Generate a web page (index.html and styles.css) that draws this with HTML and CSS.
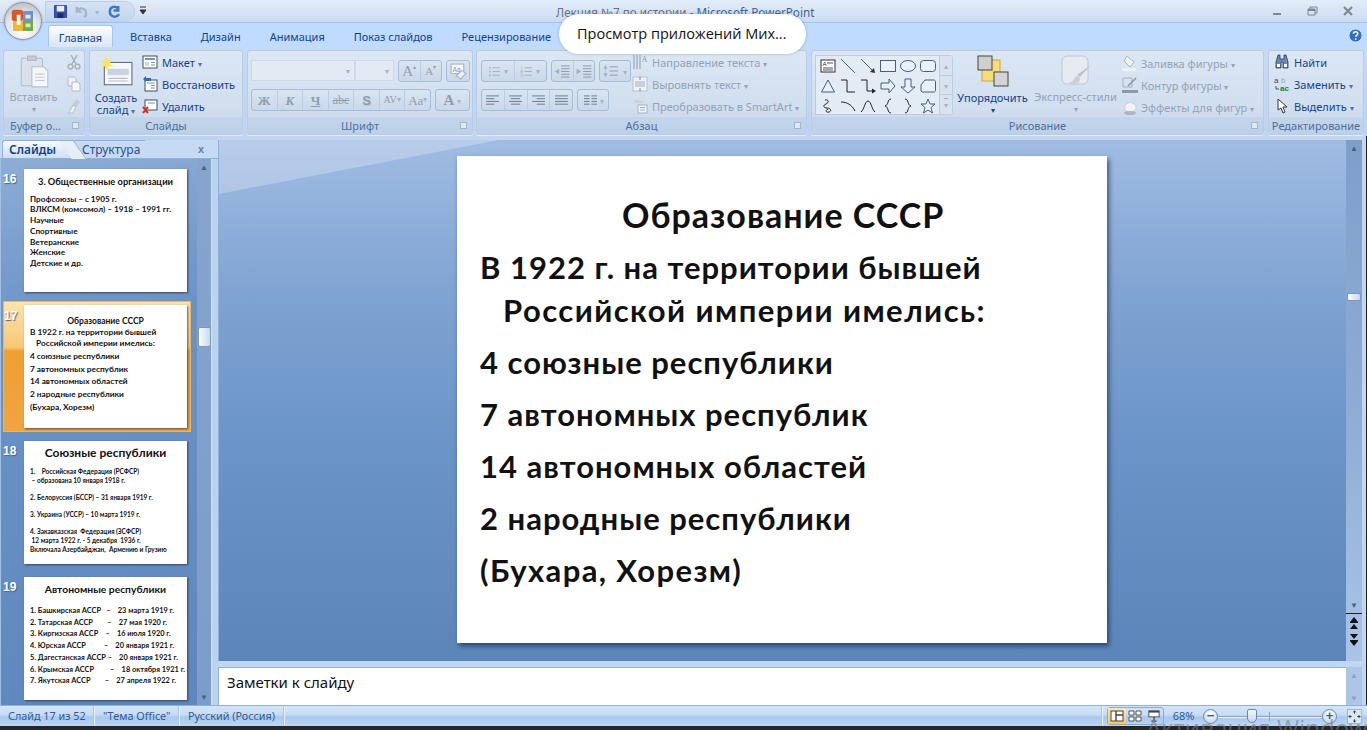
FILE: index.html

```html
<!DOCTYPE html>
<html lang="ru">
<head>
    <meta charset="UTF-8">
    <meta name="viewport" content="width=device-width, initial-scale=1.0">
    <title>Лекция №7 по истории - Microsoft PowerPoint</title>
    <link rel="stylesheet" href="styles.css">
</head>
<body>
    <header class="titlebar">
        <div class="qat">
            <svg class="qat-icon" viewBox="0 0 16 16"><rect x="1" y="1" width="14" height="14" rx="1" fill="#3a4fa8"/><rect x="4" y="2" width="8" height="6" fill="#e8eefa"/><rect x="5" y="10" width="6" height="5" fill="#1c2a70"/></svg>
            <svg class="qat-icon" viewBox="0 0 16 16"><path d="M3 3v5h5M3 8c3-5 10-4 10 2 0 2-1 3-2 4" fill="none" stroke="#a3b4cb" stroke-width="2.4"/></svg>
            <span class="qat-drop">▾</span>
            <svg class="qat-icon" viewBox="0 0 16 16"><path d="M12 2v5H7M12 5C9 1 3 3 3 8s6 8 10 3" fill="none" stroke="#3c78c8" stroke-width="2.6"/></svg>
        </div>
        <svg class="qat-more" viewBox="0 0 8 10"><path d="M1 1h6M1 4h6l-3 4z" fill="#333" stroke="#333"/></svg>
        <div class="doc-title">Лекция №7 по истории - <span class="app-name">Microsoft PowerPoint</span></div>
        <div class="win-controls">
            <svg viewBox="0 0 12 12"><rect x="1" y="8" width="8" height="2" fill="#7c8794"/></svg>
            <svg viewBox="0 0 12 12"><path d="M1 4h7v6H1zM3 4V2h7v6H8" fill="none" stroke="#7c8794"/><rect x="1" y="4" width="7" height="2" fill="#7c8794"/></svg>
            <svg viewBox="0 0 12 12"><path d="M2 2l8 8M10 2l-8 8" stroke="#7c8794" stroke-width="2.2"/></svg>
        </div>
    </header>

    <div class="office-btn">
        <svg viewBox="0 0 24 24">
            <rect x="3" y="3" width="9" height="9" rx="2" fill="#d9572b"/>
            <rect x="12" y="4" width="8" height="8" fill="#5a84c8" opacity=".85"/>
            <rect x="4" y="12" width="8" height="8" fill="#eeb735"/>
            <rect x="12" y="12" width="8" height="8" fill="#74ab3f"/>
            <rect x="7" y="7" width="3" height="8" fill="#fff"/>
            <rect x="14" y="7" width="4" height="3" fill="#fff" opacity=".8"/>
            <rect x="14" y="14" width="4" height="3" fill="#fff" opacity=".7"/>
        </svg>
    </div>

    <nav class="tabs">
        <a class="tab tab-active">Главная</a>
        <a class="tab">Вставка</a>
        <a class="tab">Дизайн</a>
        <a class="tab">Анимация</a>
        <a class="tab">Показ слайдов</a>
        <a class="tab">Рецензирование</a>
        <svg class="help" viewBox="0 0 16 16"><circle cx="8" cy="8" r="7" fill="#2f6fc4" stroke="#dbe8f8"/><path d="M5.800 6.200c0-3 4.600-3 4.600 0 0 1.600-2.200 1.600-2.200 3.200" fill="none" stroke="#fff" stroke-width="1.600"/><circle cx="8.200" cy="11.800" r="1" fill="#fff"/></svg>
    </nav>

    <div class="pill">Просмотр приложений Мих...</div>

    <section class="ribbon">
        <div class="group g-clip">
            <div class="group-body clip-body">
                <div class="big-btn off">
                    <svg class="big-icon" viewBox="0 0 30 32"><rect x="3" y="3" width="20" height="26" rx="2" fill="#d9e1ea" stroke="#b3bdc9"/><rect x="9" y="1" width="8" height="4" fill="#c7cfd9" stroke="#aab4c0"/><path d="M13 11h11l4 4v15H13z" fill="#f4f6f9" stroke="#b8c1cc"/><path d="M16 18h9M16 21h9M16 24h9" stroke="#c5ccd6"/></svg>
                    <span class="big-label">Вставить</span>
                    <span class="arrow-only">▾</span>
                </div>
                <div class="icon-col">
                    <svg viewBox="0 0 14 16"><path d="M4 1l5 9M10 1L5 10" stroke="#a7b0bb" stroke-width="1.400"/><circle cx="3.500" cy="12.500" r="2.400" fill="none" stroke="#a7b0bb" stroke-width="1.400"/><circle cx="10.500" cy="12.500" r="2.400" fill="none" stroke="#a7b0bb" stroke-width="1.400"/></svg>
                    <svg viewBox="0 0 14 16"><path d="M1 1h6l2 2v7H1z" fill="#eef1f5" stroke="#b2bbc6"/><path d="M5 6h6l2 2v7H5z" fill="#f5f7fa" stroke="#b2bbc6"/></svg>
                    <svg viewBox="0 0 14 16"><path d="M9 1l4 3-4 5-3-2z" fill="#c4ccd6"/><path d="M6 7l3 2-3 6H1c2-2 3-4 5-8z" fill="#eceff3" stroke="#b6bfc9"/></svg>
                </div>
            </div>
            <div class="group-label label-clip">Буфер о...<span class="launcher"></span></div>
        </div>

        <div class="group g-slides">
            <div class="group-body slides-body">
                <div class="big-btn new-slide">
                    <svg class="big-icon" viewBox="0 0 32 30"><rect x="5" y="6" width="26" height="21" fill="#f4f7fb" stroke="#5d6b7c"/><rect x="8" y="12" width="20" height="6" fill="#c9d2dd"/><path d="M9 21h18M9 23.500h18" stroke="#b4bfcc"/><path d="M7 0l1.500 4.500L13 3 10 7l3.500 3-4.500-.5L7 14l-1.500-4.500L1 10l3-3-3-3.500 4.500.8z" fill="#f8e564"/></svg>
                    <span class="big-label dark">Создать<br>слайд <i class="caret">▾</i></span>
                </div>
                <div class="cmd-col">
                    <div class="cmd"><svg viewBox="0 0 16 16"><rect x="1" y="2" width="14" height="12" fill="#fff" stroke="#3f4f66"/><rect x="3" y="4" width="10" height="2" fill="#7f91a8"/><rect x="3" y="8" width="4" height="4" fill="#c9d6e6"/><path d="M9 8.500h4M9 11h4" stroke="#7f91a8"/></svg><span>Макет <i class="caret">▾</i></span></div>
                    <div class="cmd"><svg viewBox="0 0 16 16"><rect x="3" y="4" width="12" height="11" fill="#fff" stroke="#3f4f66"/><path d="M5 7h8M9 9.500h4M9 12h4" stroke="#7f91a8"/><path d="M1 3l3-3v2h5v3H4v1z" fill="#2d6dc0"/></svg><span>Восстановить</span></div>
                    <div class="cmd"><svg viewBox="0 0 16 16"><rect x="3" y="2" width="12" height="10" fill="#fff" stroke="#3f4f66"/><path d="M6 5h7" stroke="#7f91a8"/><path d="M1 9l5 6M6 9l-5 6" stroke="#d8321e" stroke-width="2"/></svg><span>Удалить</span></div>
                </div>
            </div>
            <div class="group-label">Слайды</div>
        </div>

        <div class="group g-font">
            <div class="group-body font-body">
                <div class="tool-row">
                    <div class="combo font-name"><i class="caret">▾</i></div>
                    <div class="combo font-size"><i class="caret">▾</i></div>
                    <div class="box grow-box"><span class="tool serif big-a">A<sup>▴</sup></span><span class="tool serif small-a">A<sup>▾</sup></span></div>
                    <div class="box clear-box"><svg viewBox="0 0 16 16"><rect x="1" y="1" width="12" height="9" fill="#f2f5f8" stroke="#a6b1be"/><text x="2.500" y="8" font-size="6" fill="#8e99a6" font-family="Liberation Sans">Aa</text><path d="M6 12l5-5 4 3-5 5z" fill="#eef1f5" stroke="#a6b1be"/></svg></div>
                </div>
                <div class="tool-row">
                    <div class="box fmt-box">
                        <span class="tool serif b">Ж</span><span class="tool serif b it">К</span><span class="tool serif b un">Ч</span><span class="tool serif strike">abc</span><span class="tool b shadow-s">S</span><span class="tool serif av">AV<i class="caret">▾</i></span><span class="tool serif aa">Aa<i class="caret">▾</i></span>
                    </div>
                    <div class="box color-box"><span class="tool serif b a-big">A</span><i class="caret">▾</i></div>
                </div>
            </div>
            <div class="group-label">Шрифт<span class="launcher"></span></div>
        </div>

        <div class="group g-para">
            <div class="group-body para-body">
                <div class="para-left">
                    <div class="tool-row">
                        <div class="box list-box">
                            <span class="tool"><svg viewBox="0 0 20 14"><path d="M6 2h10M6 7h10M6 12h10" stroke="#9aa6b5"/><circle cx="2.500" cy="2" r="1.300" fill="#aeb8c4"/><circle cx="2.500" cy="7" r="1.300" fill="#aeb8c4"/><circle cx="2.500" cy="12" r="1.300" fill="#aeb8c4"/></svg><i class="caret">▾</i></span>
                            <span class="tool"><svg viewBox="0 0 20 14"><path d="M6 2h10M6 7h10M6 12h10" stroke="#9aa6b5"/><path d="M2 0.500v3M1 6h3v1H1v2h3M1 11h3v2H1" fill="none" stroke="#aeb8c4" stroke-width=".8"/></svg><i class="caret">▾</i></span>
                        </div>
                        <div class="box indent-box">
                            <span class="tool"><svg viewBox="0 0 18 14"><path d="M8 1h9M8 4h9M8 7h9M8 10h9M8 13h9" stroke="#8896a8"/><path d="M1 7l5-3v6z" fill="#9fb0c6"/></svg></span>
                            <span class="tool"><svg viewBox="0 0 18 14"><path d="M8 1h9M8 4h9M8 7h9M8 10h9M8 13h9" stroke="#8896a8"/><path d="M6 7L1 4v6z" fill="#9fb0c6"/></svg></span>
                        </div>
                        <div class="box spacing-box"><svg viewBox="0 0 24 16"><path d="M8 3h10M8 8h10M8 13h10" stroke="#8896a8"/><path d="M3 1l-2 4h4zM3 15l-2-4h4zM3 4v8" fill="#9fb0c6" stroke="#9fb0c6" stroke-width=".6"/></svg><i class="caret">▾</i></div>
                    </div>
                    <div class="tool-row">
                        <div class="box align-box">
                            <span class="tool"><svg viewBox="0 0 16 12"><path d="M1 1h14M1 4h9M1 7h14M1 10h9" stroke="#62738a"/></svg></span>
                            <span class="tool"><svg viewBox="0 0 16 12"><path d="M1 1h14M3 4h10M1 7h14M3 10h10" stroke="#62738a"/></svg></span>
                            <span class="tool"><svg viewBox="0 0 16 12"><path d="M1 1h14M6 4h9M1 7h14M6 10h9" stroke="#62738a"/></svg></span>
                            <span class="tool"><svg viewBox="0 0 16 12"><path d="M1 1h14M1 4h14M1 7h14M1 10h14" stroke="#62738a"/></svg></span>
                        </div>
                        <div class="box cols-box"><svg viewBox="0 0 16 12"><path d="M1 1h6M9 1h6M1 4h6M9 4h6M1 7h6M9 7h6M1 10h6M9 10h6" stroke="#62738a"/></svg><i class="caret">▾</i></div>
                    </div>
                </div>
                <div class="cmd-col off">
                    <div class="cmd"><svg viewBox="0 0 16 16"><path d="M2 1v14M5 1v14M8 1v14" stroke="#8c99a9"/><text x="9.500" y="8" font-size="8" fill="#8c99a9" font-family="Liberation Serif">A</text></svg><span>Направление текста <i class="caret">▾</i></span></div>
                    <div class="cmd"><svg viewBox="0 0 16 16"><rect x="1" y="1" width="14" height="14" fill="#eff2f6" stroke="#b7c0cb"/><path d="M3 6h10M3 8h10M3 10h10" stroke="#a3afbd"/><path d="M8 1v3M8 12v3" stroke="#7d8ea3"/></svg><span>Выровнять текст <i class="caret">▾</i></span></div>
                    <div class="cmd"><svg viewBox="0 0 16 16"><path d="M1 2h7l3 3H4z" fill="#c9d1db"/><rect x="6" y="7" width="9" height="8" fill="#f1f4f7" stroke="#aab4c0"/><path d="M8 9.500h5M8 12h5" stroke="#a3afbd"/></svg><span>Преобразовать в SmartArt <i class="caret">▾</i></span></div>
                </div>
            </div>
            <div class="group-label">Абзац<span class="launcher"></span></div>
        </div>

        <div class="group g-draw">
            <div class="group-body draw-body">
                <div class="gallery">
                    <div class="shapes">
                        <svg viewBox="0 0 16 16"><rect x="1" y="2" width="14" height="12" fill="#fff" stroke="#333"/><text x="2.500" y="8" font-size="6" font-family="Liberation Sans" fill="#222">A</text><path d="M7 5h6M3 10h10M3 12h10" stroke="#555"/></svg>
                        <svg viewBox="0 0 16 16"><path d="M1 1l14 14" stroke="#4c5d75"/></svg>
                        <svg viewBox="0 0 16 16"><path d="M1 1l13 13" stroke="#4c5d75"/><path d="M15 15l-1-5-4 4z" fill="#333"/></svg>
                        <svg viewBox="0 0 16 16"><rect x="0.500" y="2.500" width="15" height="11" fill="#e8f0fa" stroke="#4c5d75"/></svg>
                        <svg viewBox="0 0 16 16"><ellipse cx="8" cy="8" rx="7.500" ry="5.500" fill="#e8f0fa" stroke="#4c5d75"/></svg>
                        <svg viewBox="0 0 16 16"><rect x="0.500" y="2.500" width="15" height="11" rx="3" fill="#e8f0fa" stroke="#4c5d75"/></svg>
                        <svg viewBox="0 0 16 16"><path d="M8 2l6.500 12h-13z" fill="#e8f0fa" stroke="#4c5d75"/></svg>
                        <svg viewBox="0 0 16 16"><path d="M1 2h6v12h8" fill="none" stroke="#222"/></svg>
                        <svg viewBox="0 0 16 16"><path d="M1 2h6v11h7" fill="none" stroke="#222"/><path d="M16 13l-4-2.500v5z" fill="#222"/></svg>
                        <svg viewBox="0 0 16 16"><path d="M1 5h8V1l6 7-6 7v-4H1z" fill="#e8f0fa" stroke="#4c5d75"/></svg>
                        <svg viewBox="0 0 16 16"><path d="M5 1h6v8h4l-7 6-7-6h4z" fill="#e8f0fa" stroke="#4c5d75"/></svg>
                        <svg viewBox="0 0 16 16"><path d="M1 13V7l4-5h9c1 0 1.500 1 1.500 2v8c0 1-.5 2-1.500 2H2z" fill="#e8f0fa" stroke="#4c5d75"/></svg>
                        <svg viewBox="0 0 16 16"><path d="M5 2c4-1 4 3 1 4s-3 4 1 4 5 3 2 4-4-2-1-3" fill="none" stroke="#222"/></svg>
                        <svg viewBox="0 0 16 16"><path d="M1 4c6 0 11 3 14 9" fill="none" stroke="#222"/></svg>
                        <svg viewBox="0 0 16 16"><path d="M1 14C4 12 5 3 8 3s4 9 7 11" fill="none" stroke="#222"/></svg>
                        <svg viewBox="0 0 16 16"><path d="M11 1C7 1 9 7 5 8c4 1 2 7 6 7" fill="none" stroke="#222"/></svg>
                        <svg viewBox="0 0 16 16"><path d="M5 1c4 0 2 6 6 7-4 1-2 7-6 7" fill="none" stroke="#222"/></svg>
                        <svg viewBox="0 0 16 16"><path d="M8 1l2 5h5l-4 3.500 1.500 5.500L8 12l-4.500 3L5 9.500 1 6h5z" fill="#e8f0fa" stroke="#4c5d75"/></svg>
                    </div>
                    <div class="gallery-scroll">
                        <span>▴</span><span>▾</span><span class="more">▾</span>
                    </div>
                </div>
                <div class="big-btn arrange">
                    <svg class="arrange-icon" viewBox="0 0 32 32"><rect x="5" y="5" width="18" height="21" fill="#f7dd78" stroke="#c8a83a"/><rect x="1" y="1" width="14" height="14" fill="#cfcfcf" stroke="#444"/><rect x="17" y="17" width="14" height="14" fill="#d4d4d4" stroke="#444"/></svg>
                    <span class="big-label dark">Упорядочить</span>
                    <span class="arrow-only dark">▾</span>
                </div>
                <div class="big-btn express off">
                    <svg class="arrange-icon" viewBox="0 0 32 32"><rect x="2" y="1" width="26" height="28" rx="5" fill="#e6ebf1" stroke="#bdc6d1"/><path d="M31 10L20 22l-3-2z" fill="#b8c1cc"/><path d="M17 21c-3 1-2 5-8 7 5 2 11 0 11-5z" fill="#c6ced8"/></svg>
                    <span class="big-label">Экспресс-стили</span>
                    <span class="arrow-only">▾</span>
                </div>
                <div class="cmd-col off">
                    <div class="cmd"><svg viewBox="0 0 16 16"><path d="M5 1l7 6-4 5-6-6z" fill="#eef1f5" stroke="#aab4c0"/><rect x="0" y="13" width="14" height="3" fill="#edf1f5"/></svg><span>Заливка фигуры <i class="caret">▾</i></span></div>
                    <div class="cmd"><svg viewBox="0 0 16 16"><path d="M1 1h9v9H1z" fill="none" stroke="#a4afbd"/><path d="M14 1l-8 8" stroke="#8795a7" stroke-width="1.600"/><rect x="0" y="13" width="16" height="3" fill="#8d99a8"/></svg><span>Контур фигуры <i class="caret">▾</i></span></div>
                    <div class="cmd"><svg viewBox="0 0 16 16"><path d="M3 6l5-3 6 3v5l-6 3-5-3z" fill="#f1f3f6" stroke="#c9d0d9"/><ellipse cx="8" cy="14" rx="6" ry="2" fill="#aab6c4"/></svg><span>Эффекты для фигур <i class="caret">▾</i></span></div>
                </div>
            </div>
            <div class="group-label">Рисование<span class="launcher"></span></div>
        </div>

        <div class="group g-edit">
            <div class="group-body edit-body">
                <div class="cmd-col">
                    <div class="cmd"><svg viewBox="0 0 16 16"><path d="M4 1h2v4h4V1h2l2 7v6H9V8H7v6H2V8z" fill="#6f87aa" stroke="#24386a" stroke-width=".8"/><rect x="3" y="10" width="3" height="3" fill="#fff"/><rect x="10" y="10" width="3" height="3" fill="#fff"/></svg><span>Найти</span></div>
                    <div class="cmd"><svg viewBox="0 0 16 16"><text x="0" y="7" font-size="8" font-family="Liberation Sans" fill="#444">a</text><text x="7" y="7" font-size="8" font-family="Liberation Sans" fill="#9aa8b8">b</text><text x="6" y="15" font-size="8" font-weight="bold" font-family="Liberation Sans" fill="#1f7a3a">ac</text><path d="M2 10v3h3" fill="none" stroke="#33578c"/></svg><span>Заменить <i class="caret">▾</i></span></div>
                    <div class="cmd"><svg viewBox="0 0 16 16"><path d="M4 1v11l3-2 2 5 2-1-2-5h4z" fill="#fff" stroke="#333"/></svg><span>Выделить <i class="caret">▾</i></span></div>
                </div>
            </div>
            <div class="group-label">Редактирование</div>
        </div>
    </section>

    <main class="workspace">
        <aside class="pane">
            <div class="pane-tabs">
                <span class="pane-tab pane-tab-on">Слайды</span>
                <span class="pane-tab">Структура</span>
                <span class="pane-close">x</span>
            </div>
            <div class="pane-body">
                <div class="thumbs">
                    <div class="thumb-row t16">
                        <span class="num">16</span>
                        <div class="thumb">
                            <h4 class="thumb-title">3. Общественные организации</h4>
                            <p>Профсоюзы – с 1905 г.</p>
                            <p>ВЛКСМ (комсомол) – 1918 – 1991 гг.</p>
                            <p>Научные</p>
                            <p>Спортивные</p>
                            <p>Ветеранские</p>
                            <p>Женские</p>
                            <p>Детские и др.</p>
                        </div>
                    </div>
                    <div class="thumb-row t17 selected">
                        <span class="num">17</span>
                        <div class="thumb">
                            <h4 class="thumb-title">Образование СССР</h4>
                            <p class="tight">В 1922 г. на территории бывшей</p>
                            <p class="hang">Российской империи имелись:</p>
                            <p>4 союзные республики</p>
                            <p>7 автономных республик</p>
                            <p>14 автономных областей</p>
                            <p>2 народные республики</p>
                            <p>(Бухара, Хорезм)</p>
                        </div>
                    </div>
                    <div class="thumb-row t18">
                        <span class="num">18</span>
                        <div class="thumb">
                            <h4 class="thumb-title">Союзные республики</h4>
                            <p>1.&nbsp;&nbsp;&nbsp;&nbsp;Российская Федерация (РСФСР)</p>
                            <p class="gap-after">&nbsp;– образована 10 января 1918 г.</p>
                            <p class="gap-after">2. Белоруссия (БССР) – 31 января 1919 г.</p>
                            <p class="gap-after">3. Украина (УССР) – 10 марта 1919 г.</p>
                            <p>4. Закавказская&nbsp; Федерация (ЗСФСР)</p>
                            <p>&nbsp;12 марта 1922 г. - 5 декабря&nbsp; 1936 г.</p>
                            <p>Включала Азербайджан,&nbsp; Армению и Грузию</p>
                        </div>
                    </div>
                    <div class="thumb-row t19">
                        <span class="num">19</span>
                        <div class="thumb">
                            <h4 class="thumb-title">Автономные республики</h4>
                            <p>1. Башкирская АССР&nbsp;&nbsp; –&nbsp;&nbsp;&nbsp; 23 марта 1919 г.</p>
                            <p>2. Татарская АССР&nbsp;&nbsp;&nbsp;&nbsp;&nbsp;&nbsp;&nbsp; –&nbsp;&nbsp;&nbsp; 27 мая 1920 г.</p>
                            <p>3. Киргизская АССР&nbsp;&nbsp;&nbsp; –&nbsp;&nbsp;&nbsp; 16 июля 1920 г.</p>
                            <p>4. Юрская АССР&nbsp;&nbsp;&nbsp;&nbsp;&nbsp;&nbsp;&nbsp;&nbsp;&nbsp; –&nbsp;&nbsp;&nbsp; 20 января 1921 г.</p>
                            <p>5. Дагестанская АССР –&nbsp;&nbsp;&nbsp; 20 января 1921 г.</p>
                            <p>6. Крымская АССР&nbsp;&nbsp;&nbsp;&nbsp;&nbsp;&nbsp;&nbsp;&nbsp; –&nbsp;&nbsp;&nbsp; 18 октября 1921 г.</p>
                            <p>7. Якутская АССР&nbsp;&nbsp;&nbsp;&nbsp;&nbsp;&nbsp;&nbsp; –&nbsp;&nbsp;&nbsp; 27 апреля 1922 г.</p>
                        </div>
                    </div>
                </div>
                <div class="pane-scroll">
                    <span class="sb-arrow">▲</span>
                    <span class="sb-thumb"></span>
                    <span class="sb-arrow sb-end">▼</span>
                </div>
            </div>
        </aside>

        <div class="editor">
            <div class="stage">
                <article class="slide">
                    <h1 class="slide-title">Образование СССР</h1>
                    <p class="slide-line first">В 1922 г. на территории бывшей</p>
                    <p class="slide-line hanging">Российской империи имелись:</p>
                    <p class="slide-line">4 союзные республики</p>
                    <p class="slide-line">7 автономных республик</p>
                    <p class="slide-line">14 автономных областей</p>
                    <p class="slide-line">2 народные республики</p>
                    <p class="slide-line wide">(Бухара, Хорезм)</p>
                </article>
            </div>
            <div class="notes">Заметки к слайду</div>
        </div>

        <div class="main-scroll">
            <div class="stage-scroll">
                <span class="sb-arrow">▲</span>
                <span class="sb-thumb main-thumb"></span>
                <span class="sb-arrow sb-end">▼</span>
                <svg class="page-btn" viewBox="0 0 10 13"><path d="M5 0l4 5H1zM5 7l4 5H1z" fill="#111"/><rect x="1" y="5" width="8" height="1" fill="#111"/></svg>
                <svg class="page-btn" viewBox="0 0 10 13"><path d="M5 6l4-5H1zM5 13l4-5H1z" fill="#111"/><rect x="1" y="7" width="8" height="1" fill="#111"/></svg>
            </div>
            <div class="notes-scroll">
                <span class="sb-arrow">▲</span>
                <span class="sb-arrow">▼</span>
            </div>
        </div>
    </main>

    <footer class="status">
        <span class="st-item st-first">Слайд 17 из 52</span>
        <span class="st-item st-theme">"Тема Office"</span>
        <span class="st-item st-lang">Русский (Россия)</span>
        <div class="st-right">
            <div class="view-btns">
                <span class="view-btn view-on"><svg viewBox="0 0 14 12"><rect x="1" y="1" width="12" height="10" fill="#fff" stroke="#444"/><path d="M6 1v10M6 5h7" stroke="#444" stroke-width="1.400"/></svg></span>
                <span class="view-btn"><svg viewBox="0 0 14 12"><path d="M1 1h5v4H1zM8 1h5v4H8zM1 7h5v4H1zM8 7h5v4H8z" fill="#fff" stroke="#555"/></svg></span>
                <span class="view-btn"><svg viewBox="0 0 14 14"><rect x="1" y="1" width="12" height="7" fill="#fff" stroke="#444"/><path d="M7 8v4M4 13h6" stroke="#444" stroke-width="1.400"/><rect x="1" y="1" width="12" height="2" fill="#444"/></svg></span>
            </div>
            <span class="zoom-pct">68%</span>
            <span class="zoom-round">−</span>
            <div class="zoom-track"><span class="zoom-mid"></span><span class="zoom-knob"></span></div>
            <span class="zoom-round">+</span>
            <span class="zoom-fit"><svg viewBox="0 0 14 14"><path d="M7 1v3M5.500 2.500L7 1l1.500 1.500M7 13v-3M5.500 11.500L7 13l1.500-1.500M1 7h3M2.500 5.500L1 7l1.500 1.500M13 7h-3M11.500 5.500L13 7l-1.500 1.500" fill="none" stroke="#333"/></svg></span>
        </div>
    </footer>
    <div class="bottom-strip"></div>
    <div class="activation">Активация Windows</div>
</body>
</html>
```

FILE: styles.css

```css
* {
    box-sizing: border-box;
}

html, body {
    height: 730px;
}

body {
    position: relative;
    margin: 0;
    overflow: hidden;
    display: flex;
    flex-direction: column;
    font-family: "Noto Sans", "Open Sans", sans-serif;
    font-size: 11px;
    color: #15428b;
    background: #bfd6f3;
}

svg {
    display: block;
    flex: none;
}

i {
    font-style: normal;
}

.caret {
    font-size: 8px;
    color: #5c7397;
}

/* title bar */
.titlebar {
    height: 23px;
    display: flex;
    align-items: center;
    padding-left: 45px;
    background: linear-gradient(#e3ecf8, #d6e3f4 60%, #c9dbf2);
    border-bottom: 1px solid #a4c1e6;
}

.qat {
    width: 90px;
    height: 21px;
    display: flex;
    align-items: center;
    gap: 6px;
    padding-left: 7px;
    background: linear-gradient(#d5e2f3, #c2d5ee);
    border-radius: 0 12px 12px 0;
    border: 1px solid #b9cde8;
}

.qat-icon {
    width: 15px;
    height: 15px;
}

.qat-drop {
    font-size: 8px;
    color: #a3b4cb;
    width: 6px;
}

.qat-more {
    width: 8px;
    height: 10px;
    margin-left: 4px;
}

.doc-title {
    width: 250px;
    margin-left: 409px;
    white-space: nowrap;
    font-size: 11.700px;
    color: #69727f;
    padding-top: 1px;
}

.app-name {
    color: #3f6397;
}

.win-controls {
    margin-left: auto;
    display: flex;
    gap: 23px;
    padding-right: 13px;
}

.win-controls svg {
    width: 12px;
    height: 12px;
}

.office-btn {
    position: absolute;
    left: 4px;
    top: 2px;
    width: 38px;
    height: 38px;
    border-radius: 50%;
    display: flex;
    align-items: center;
    justify-content: center;
    background: radial-gradient(circle at 50% 75%, #fff, #dfe3e8 55%, #a9adb3);
    border: 1px solid #8e97a3;
    box-shadow: 0 0 2px rgba(60, 80, 110, .5);
}

.office-btn svg {
    width: 30px;
    height: 30px;
}

/* tabs */
.tabs {
    height: 24px;
    display: flex;
    align-items: flex-end;
    padding-left: 48px;
    background: #bfdbff;
}

.tab {
    height: 22px;
    padding: 4px 12px 0;
    margin-right: 5px;
    font-size: 11px;
    white-space: nowrap;
    color: #15428b;
}

.tab-active {
    width: 65px;
    padding: 4px 0 0;
    text-align: center;
    margin-right: 5px;
    background: linear-gradient(#fbfdff, #d9e6f6);
    border: 1px solid #a9c4e8;
    border-bottom: 0;
    border-radius: 3px 3px 0 0;
}

.help {
    width: 15px;
    height: 15px;
    margin-left: auto;
    margin-right: 4px;
    margin-bottom: 4px;
}

.pill {
    position: absolute;
    left: 559px;
    top: 14px;
    width: 247px;
    height: 40px;
    border-radius: 20px;
    background: #fff;
    color: #111;
    font-family: "Open Sans", sans-serif;
    font-size: 14.500px;
    line-height: 40px;
    padding-left: 18px;
    white-space: nowrap;
    box-shadow: 0 0 3px rgba(50, 70, 100, .35);
}

/* ribbon */
.ribbon {
    height: 89px;
    display: flex;
    gap: 4px;
    padding: 3px 3px 1px;
    background: linear-gradient(#c4daf6, #bcd3ef);
}

.group {
    display: flex;
    flex-direction: column;
    border: 1px solid #b7cbe3;
    border-radius: 3px;
    background: linear-gradient(#dce7f4, #d0deef 70%, #c8d9ec);
    box-shadow: 0 1px 1px #e6eefa;
}

.g-clip { width: 82px; }
.g-slides { width: 154px; }
.g-font { width: 226px; }
.g-para { width: 331px; margin-left: -1px; }
.g-draw { width: 453px; }
.g-edit { width: 96px; }

.group-body {
    flex: 1;
    display: flex;
    min-height: 0;
}

.group-label {
    position: relative;
    height: 17px;
    flex: none;
    text-align: center;
    line-height: 18px;
    font-size: 11px;
    color: #4d6e9c;
    background: linear-gradient(#c4d5ea, #bcd0e8);
}

.label-clip {
    text-align: left;
    padding-left: 6px;
}

.launcher {
    position: absolute;
    right: 5px;
    top: 5px;
    width: 7px;
    height: 7px;
    border: 1px solid #a3b5cc;
    background: #dfe8f3;
}

.big-btn {
    display: flex;
    flex-direction: column;
    align-items: center;
    flex: none;
}

.big-label {
    line-height: 12px;
    text-align: center;
    white-space: nowrap;
    color: #93a2b5;
    margin-top: 2px;
}

.big-label.dark,
.arrow-only.dark {
    color: #15428b;
}

.arrow-only {
    font-size: 8px;
    line-height: 12px;
    color: #93a2b5;
}

.big-icon {
    width: 34px;
    height: 34px;
    margin-top: 3px;
}

.off .cmd span,
.off .caret {
    color: #93a2b5;
}

/* clipboard */
.clip-body {
    padding: 1px 0 0 5px;
}

.clip-body .big-btn {
    width: 49px;
}

.icon-col {
    display: flex;
    flex-direction: column;
    gap: 6px;
    padding: 2px 0 0 9px;
}

.icon-col svg {
    width: 14px;
    height: 16px;
}

/* commands */
.cmd-col {
    display: flex;
    flex-direction: column;
    gap: 6px;
    padding-top: 3px;
}

.cmd {
    height: 16px;
    display: flex;
    align-items: center;
    gap: 4px;
    white-space: nowrap;
    font-size: 11px;
}

.cmd svg {
    width: 16px;
    height: 16px;
}

/* slides */
.new-slide {
    width: 52px;
}

.new-slide .big-icon {
    margin-top: 4px;
}

.new-slide .big-label {
    margin-top: 3px;
}

/* font */
.font-body,
.para-left {
    flex-direction: column;
    gap: 7px;
}

.font-body {
    padding: 9px 0 0 3px;
}

.para-left {
    display: flex;
    padding: 9px 0 0 4px;
    width: 157px;
    flex: none;
}

.tool-row {
    display: flex;
    height: 22px;
    gap: 4px;
}

.combo {
    height: 21px;
    display: flex;
    justify-content: flex-end;
    align-items: center;
    padding-right: 4px;
    background: #e3eaf3;
    border: 1px solid #cfd9e6;
}

.combo .caret {
    color: #a6b2c2;
}

.font-name { width: 104px; }
.font-size { width: 39px; margin-left: -4px; }

.box {
    height: 22px;
    display: flex;
    align-items: center;
    justify-content: center;
    border: 1px solid #a8bcd6;
    border-radius: 3px;
    background: linear-gradient(#dbe5f1, #c9d8eb);
    color: #8f9dae;
}

.box .caret {
    color: #a6b2c2;
}

.tool {
    flex: 1;
    height: 100%;
    display: flex;
    align-items: center;
    justify-content: center;
    border-right: 1px solid #bccde2;
    line-height: 1;
}

.tool:last-child {
    border-right: 0;
}

.tool svg {
    width: 18px;
    height: 13px;
}

.serif {
    font-family: "Liberation Serif", serif;
}

.b { font-weight: bold; font-size: 13px; }
.it { font-style: italic; }
.un { text-decoration: underline; }
.strike { text-decoration: line-through; font-size: 12px; }
.shadow-s { font-family: "Liberation Sans", sans-serif; text-shadow: 1px 1px 1px #b9c2ce; }
.av { font-size: 10px; }
.aa { font-size: 13px; }

sup {
    font-size: 6px;
    align-self: flex-start;
    margin-top: 3px;
}

.big-a { font-size: 15px; }
.small-a { font-size: 11px; }
.a-big { font-size: 15px; }

.grow-box { width: 44px; }
.clear-box { width: 24px; }
.clear-box svg { width: 17px; height: 17px; }
.fmt-box { width: 180px; }
.color-box { width: 35px; gap: 3px; }
.color-box .tool { border: 0; flex: none; }

/* paragraph */
.list-box { width: 66px; }
.list-box svg { width: 15px; height: 11px; margin-right: 1px; }
.indent-box { width: 44px; }
.spacing-box { width: 32px; }
.spacing-box svg { width: 20px; height: 14px; }
.align-box { width: 92px; }
.cols-box { width: 32px; gap: 2px; }
.cols-box svg { width: 15px; height: 11px; }
.align-box svg { width: 15px; height: 11px; }

.para-body .cmd-col {
    margin-left: -2px;
}

/* drawing */
.draw-body {
    padding: 4px 0 0 3px;
}

.gallery {
    display: flex;
    height: 60px;
    flex: none;
}

.shapes {
    width: 124px;
    display: grid;
    grid-template-columns: repeat(6, 20px);
    grid-auto-rows: 20px;
    justify-items: center;
    align-items: center;
    padding-left: 2px;
    border: 1px solid #bccde2;
    border-right: 0;
    background: #e3ebf5;
}

.shapes svg {
    width: 16px;
    height: 16px;
}

.gallery-scroll {
    width: 14px;
    display: flex;
    flex-direction: column;
    border: 1px solid #bccde2;
    border-radius: 0 3px 3px 0;
}

.gallery-scroll span {
    flex: 1;
    display: flex;
    align-items: center;
    justify-content: center;
    font-size: 8px;
    color: #a5b2c3;
    background: #d9e3ef;
    border-bottom: 1px solid #bccde2;
}

.gallery-scroll .more {
    border-bottom: 0;
    text-decoration: overline;
}

.arrange {
    width: 77px;
    margin-left: 1px;
}

.arrange .big-label {
    margin-top: 5px;
}

.express .big-label {
    margin-top: 4px;
}

.arrange-icon {
    width: 32px;
    height: 32px;
}

.express {
    width: 87px;
    margin-left: 1px;
}

.draw-body .cmd-col {
    margin-left: 3px;
    padding-top: 0;
}

.draw-body .cmd {
    gap: 3px;
}

/* editing */
.edit-body {
    padding-left: 5px;
}

/* workspace */
.workspace {
    height: 569px;
    flex: none;
    display: flex;
    background: #c1d7f1;
}

.pane {
    width: 218px;
    flex: none;
    display: flex;
    flex-direction: column;
    padding-top: 4px;
    background: #bcd3ef;
}

.pane-tabs {
    height: 19px;
    display: flex;
    align-items: flex-end;
    padding-left: 2px;
    background: #c6daf3;
    border-bottom: 1px solid #8fb0d8;
}

.pane-tab {
    position: relative;
    height: 18px;
    width: 72px;
    padding-left: 8px;
    font-size: 12px;
    line-height: 17px;
    color: #2a4f85;
    border: 1px solid #8fb0d8;
    border-right: 0;
    border-bottom: 0;
    border-radius: 3px 0 0 0;
    background: #c6daf3;
}

/* slanted right edge of the pane tabs */
.pane-tab::after {
    content: "";
    position: absolute;
    top: -1px;
    right: -7px;
    width: 14px;
    height: 18px;
    transform: skewX(35deg);
    border-top: 1px solid #8fb0d8;
    border-right: 1px solid #8fb0d8;
    background: inherit;
    z-index: -1;
}

.pane-tab-on {
    padding-left: 6px;
    width: 71px;
    font-weight: 600;
    color: #15428b;
    z-index: 1;
    background: linear-gradient(#f5f9fe, #cfe0f5);
}

.pane-tab-on::after {
    background: #e6eff9;
}

.pane-close {
    margin-left: auto;
    margin-right: 14px;
    font: bold 11px "Liberation Sans", sans-serif;
    line-height: 17px;
    color: #6a7e9a;
}

.pane-body {
    flex: 1;
    display: flex;
    min-height: 0;
}

.thumbs {
    width: 197px;
    flex: none;
    background: linear-gradient(170deg, #8dadd6, #6b93c6 30%, #5e88bd);
    border-left: 1px solid #a3bfe3;
    padding-top: 6px;
    overflow: hidden;
}

.thumb-row {
    position: relative;
    width: 188px;
    margin-left: 2px;
    padding: 4px 3px 4px 21px;
    margin-bottom: 5px;
}

.num {
    position: absolute;
    left: 0;
    top: 7px;
    font: bold 12px "Liberation Sans", sans-serif;
    color: #fff;
    text-shadow: 1px 1px 1px #48688f;
}

.selected {
    background: linear-gradient(#fde3ac, #f8c877 35%, #efa033 38%, #f0a341);
    border: 1px solid #f2b35f;
    padding: 3px 2px 3px 20px;
}

.thumb {
    width: 163px;
    height: 123px;
    background: #fff;
    color: #111;
    font-family: "Lato", "Open Sans", sans-serif;
    font-weight: bold;
    box-shadow: 1px 1px 2px rgba(25, 45, 80, .75);
    overflow: hidden;
    padding: 0 6px;
}

.thumb p {
    margin: 0;
    white-space: nowrap;
}

.thumb-title {
    margin: 0;
    font-weight: bold;
    text-align: center;
    white-space: nowrap;
}

.t16 .thumb-title { font-size: 9.300px; line-height: 12px; padding-top: 7px; margin-bottom: 5.500px; }
.t16 p { font-size: 8.200px; line-height: 10.800px; }

.t17 .thumb-title { font-size: 8.500px; padding-top: 10px; line-height: 12px; }
.t17 p { font-size: 8.300px; line-height: 12.700px; }
.t17 .tight { line-height: 11px; }
.t17 .hang { padding-left: 6px; line-height: 11px; margin-bottom: 1px; }

.t18 .thumb-title { font-size: 12px; line-height: 14px; padding-top: 5px; margin-bottom: 6.500px; }
.t18 p { font-size: 6.500px; line-height: 9px; }
.t18 .gap-after { margin-bottom: 8px; }

.t19 .thumb-title { font-size: 10.300px; line-height: 12px; padding-top: 6px; margin-bottom: 10px; }
.t19 p { font-size: 7.400px; line-height: 11.700px; }

.pane-scroll,
.stage-scroll,
.notes-scroll {
    display: flex;
    flex-direction: column;
    align-items: center;
}

.pane-scroll {
    width: 15px;
    flex: none;
    border-right: 1px solid #d3e2f5;
    background: linear-gradient(#86a4cd, #7c9dca);
}

.sb-arrow {
    font-size: 8px;
    line-height: 16px;
    color: #4a5f80;
}

.sb-end {
    margin-top: auto;
}

.sb-thumb {
    width: 13px;
    height: 20px;
    margin-top: 152px;
    border: 1px solid #7d98bb;
    border-radius: 2px;
    background: linear-gradient(90deg, #fafcff, #c8d9ee);
}

.editor {
    flex: 1;
    min-width: 0;
    display: flex;
    flex-direction: column;
    padding-top: 4px;
}

.stage {
    position: relative;
    height: 521px;
    flex: none;
    padding: 16px 0 0 238px;
    background: linear-gradient(#a0bce3, #7fa3d2 30%, #6a93c7 60%, #5c86ba);
    border-left: 1px solid #8fb0d8;
}

/* lighter wedge in the top left corner of the editing area */
.stage::before {
    content: "";
    position: absolute;
    left: 0;
    top: 0;
    width: 280px;
    height: 54px;
    background: rgba(255, 255, 255, .25);
    clip-path: polygon(0 0, 100% 0, 0 100%);
}

.slide {
    position: relative;
    width: 650px;
    height: 487px;
    padding: 41px 0 0 23px;
    background: #fff;
    color: #111;
    font-family: "Lato", "Open Sans", sans-serif;
    font-weight: bold;
    letter-spacing: 1px;
    box-shadow: 2px 3px 5px rgba(20, 40, 75, .7);
}

.slide-title {
    margin: 0 0 13px;
    padding-left: 142px;
    font-size: 34px;
    line-height: 36px;
    font-weight: bold;
    white-space: nowrap;
}

.slide-line {
    margin: 0;
    font-size: 31px;
    line-height: 52px;
    white-space: nowrap;
}

.slide-line.first {
    line-height: 43px;
}

.slide-line.hanging {
    line-height: 43px;
    padding-left: 23px;
    margin-bottom: 4px;
    letter-spacing: 1.450px;
}

.slide-line.wide {
    letter-spacing: 1.400px;
}

.notes {
    margin-top: 6px;
    height: 38px;
    padding: 4px 0 0 8px;
    background: #fff;
    color: #111;
    font-size: 15px;
    border-top: 1px solid #8fb0d8;
    border-left: 1px solid #8fb0d8;
}

.main-scroll {
    width: 21px;
    flex: none;
    display: flex;
    flex-direction: column;
    padding-top: 4px;
    border-right: 1px solid #222;
}

.stage-scroll {
    height: 521px;
    width: 16px;
    flex: none;
    padding-bottom: 15px;
    background: linear-gradient(#7f9fca, #8dabd4 50%, #a9c4e6);
}

.main-thumb {
    height: 8px;
    margin-top: 137px;
    width: 14px;
}

.page-btn {
    width: 10px;
    height: 13px;
    margin-top: 3px;
}

.stage-scroll .sb-end {
    border-bottom: 1px solid #222;
    width: 100%;
    text-align: center;
}

.notes-scroll {
    height: 38px;
    width: 16px;
    margin-top: 6px;
    justify-content: space-between;
    background: #abc6e6;
}

.notes-scroll .sb-arrow {
    line-height: 15px;
    color: #8ba2c1;
}

/* status bar */
.status {
    height: 21px;
    flex: none;
    display: flex;
    align-items: stretch;
    font-size: 10.800px;
    line-height: 20px;
    color: #2f5a94;
    background: linear-gradient(#d5e5f8, #c6dbf5 45%, #a9c8ee 55%, #bcd6f5);
    border-top: 1px solid #8fb0d8;
}

.st-item {
    padding-left: 8px;
    white-space: nowrap;
    border-right: 1px solid #aac4e4;
    box-shadow: 1px 0 0 #e5f0fc;
}

.st-first { width: 94px; }
.st-theme { width: 85px; padding-left: 9px; }
.st-lang { width: 105px; padding-left: 9px; }

.st-right {
    margin-left: auto;
    width: 266px;
    display: flex;
    align-items: center;
    padding-left: 5px;
    border-left: 1px solid #aac4e4;
    box-shadow: inset 1px 0 0 #e5f0fc;
}

.view-btns {
    display: flex;
    height: 18px;
    width: 57px;
    border: 1px solid #8fa9c9;
    border-radius: 3px;
}

.view-btn {
    flex: 1;
    display: flex;
    align-items: center;
    justify-content: center;
}

.view-btn svg {
    width: 14px;
    height: 12px;
}

.view-on {
    background: linear-gradient(#fde7b4, #fbc75f);
}

.zoom-pct {
    width: 39px;
    text-align: center;
    font-size: 11px;
}

.zoom-round {
    width: 15px;
    height: 15px;
    flex: none;
    border-radius: 50%;
    border: 1px solid #6d88ab;
    background: radial-gradient(circle at 50% 30%, #fff, #b9cde6);
    font: bold 13px/12px "Liberation Sans", sans-serif;
    text-align: center;
    color: #44597a;
}

.zoom-track {
    position: relative;
    width: 104px;
    height: 1px;
    background: #8ba3c2;
    box-shadow: 0 1px 0 #eef5fd;
}

.zoom-mid {
    position: absolute;
    left: 51px;
    top: -4px;
    width: 1px;
    height: 9px;
    background: #8ba3c2;
}

.zoom-knob {
    position: absolute;
    left: 29px;
    top: -7px;
    width: 10px;
    height: 14px;
    border: 1px solid #6d88ab;
    border-radius: 2px 2px 5px 5px;
    background: linear-gradient(#f4f8fd, #c3d5ea);
}

.zoom-fit {
    width: 15px;
    height: 15px;
    margin-left: 10px;
    border: 1px solid #9db4d1;
    background: #dde8f5;
}

.zoom-fit svg {
    width: 13px;
    height: 13px;
}

.bottom-strip {
    flex: 1;
    background: #262626;
}

.activation {
    position: absolute;
    left: 1146px;
    top: 713px;
    font-family: "Open Sans", sans-serif;
    font-size: 24px;
    line-height: 30px;
    color: rgba(125, 125, 125, .6);
    white-space: nowrap;
}
```
